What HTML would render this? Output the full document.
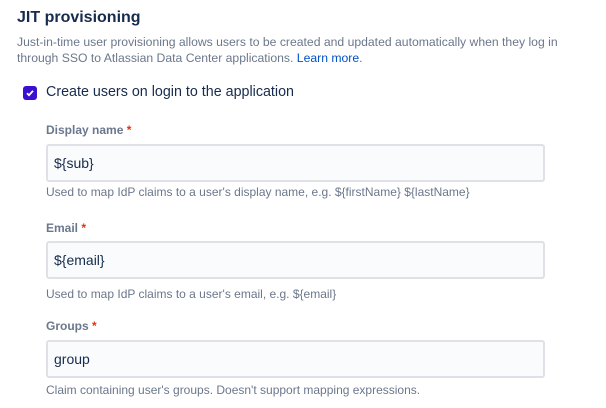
<!DOCTYPE html>
<html><head><style>
body{margin:0;width:606px;height:408px;background:#fff;font-family:"Liberation Sans",sans-serif;position:relative;overflow:hidden}
.a{position:absolute;white-space:nowrap}
h1{position:absolute;left:17px;top:9px;margin:0;font-size:16px;font-weight:bold;color:#172b4d}
.d{left:17px;font-size:12.2px;color:#6b778c;line-height:16px}
.lab{left:46px;font-size:12px;font-weight:bold;color:#6b778c}
.lab span{color:#de350b}
.in{position:absolute;left:46px;width:489px;height:34px;border:2px solid #dfe1e6;border-radius:3px;background:#fafbfc;font-size:14px;color:#172b4d;line-height:34px;padding-left:6px;box-sizing:content-box}
.h{left:46px;font-size:12px;color:#6b778c}
</style></head><body>
<h1>JIT provisioning</h1>
<div class="a d" style="top:34px">Just-in-time user provisioning allows users to be created and updated automatically when they log in<br>through SSO to Atlassian Data Center applications. <span style="color:#0052cc">Learn more</span>.</div>
<div class="a" style="left:23px;top:86px;width:14px;height:14px;background:#3b0fd1;border-radius:3px"><svg width="14" height="14" viewBox="0 0 14 14"><path d="M4 7.2l2 2 4-4.4" fill="none" stroke="#fff" stroke-width="1.8"/></svg></div>
<div class="a" style="left:46px;top:84px;font-size:14.3px;color:#172b4d">Create users on login to the application</div>
<div class="a lab" style="top:123px">Display name <span>*</span></div>
<div class="in" style="top:144px">${sub}</div>
<div class="a h" style="top:185px">Used to map IdP claims to a user's display name, e.g. ${firstName} ${lastName}</div>
<div class="a lab" style="top:221px">Email <span>*</span></div>
<div class="in" style="top:241px">${email}</div>
<div class="a h" style="top:287px">Used to map IdP claims to a user's email, e.g. ${email}</div>
<div class="a lab" style="top:319px">Groups <span>*</span></div>
<div class="in" style="top:340px">group</div>
<div class="a h" style="top:383px">Claim containing user's groups. Doesn't support mapping expressions.</div>
</body></html>
